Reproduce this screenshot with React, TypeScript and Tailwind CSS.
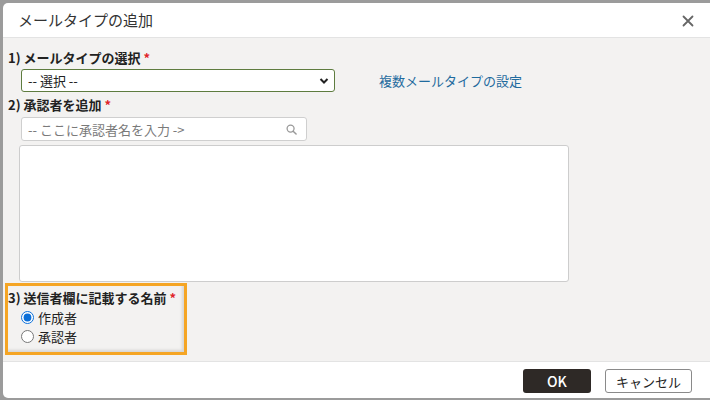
import React from "react";

const font = { fontFamily: '"Noto Sans CJK JP", "Noto Sans", sans-serif' };

const Req = () => <span className="ml-[3px] text-[#e0242b]">*</span>;

export default function App() {
  return (
    <div
      className="w-[710px] h-[400px] overflow-hidden bg-[#9b9b9b] pt-[3px] pl-[3px] text-[#222]"
      style={font}
    >
      <div className="w-[707px] h-[395px] flex flex-col bg-white rounded-tl-[5px] rounded-bl-[5px] overflow-hidden">
        {/* header */}
        <div className="h-[35px] shrink-0 flex items-center justify-between pl-[15px] pr-[16px] border-b border-[#e3e3e3]">
          <span className="text-[15px] text-[#333]">メールタイプの追加</span>
          <svg width="12" height="12" viewBox="0 0 12 12" className="mt-[1px]">
            <path d="M1.5 1.5 L10.5 10.5 M10.5 1.5 L1.5 10.5" stroke="#666" strokeWidth="1.8" strokeLinecap="round" />
          </svg>
        </div>

        {/* body */}
        <div className="flex-1 bg-[#f3f2f1] flex flex-col text-[13px]">
          <div className="mt-[11px] ml-[5px] h-[18px] leading-[18px] font-bold">
            1) メールタイプの選択<Req />
          </div>
          <div className="mt-[2px] flex items-center">
            <div className="ml-[18px] w-[314px] h-[23px] bg-white border border-[#5e7c3f] rounded-[3px] flex items-center justify-between pl-[6px] pr-[5px]">
              <span className="leading-none">-- 選択 --</span>
              <svg width="10" height="8" viewBox="0 0 10 8">
                <path d="M1.5 2 L5 5.5 L8.5 2" stroke="#222" strokeWidth="2" fill="none" />
              </svg>
            </div>
            <span className="ml-[44px] text-[#1f6b9e]">複数メールタイプの設定</span>
          </div>

          <div className="mt-[4px] ml-[5px] h-[18px] leading-[18px] font-bold">
            2) 承認者を追加<Req />
          </div>
          <div className="mt-[3px] ml-[18px] w-[286px] h-[24px] bg-white border border-[#cfcfcf] rounded-[3px] flex items-center justify-between pl-[6px] pr-[9px]">
            <span className="text-[#7a7a7a] leading-none">-- ここに承認者名を入力 -&gt;</span>
            <svg width="11" height="11" viewBox="0 0 12 12">
              <circle cx="5" cy="5" r="3.8" stroke="#999" strokeWidth="1.4" fill="none" />
              <path d="M7.8 7.8 L11 11" stroke="#999" strokeWidth="1.6" strokeLinecap="round" />
            </svg>
          </div>
          <div className="mt-[4px] ml-[16px] w-[550px] h-[137px] bg-white border border-[#cdcdcd] rounded-[3px]" />

          <div className="mt-[1px] ml-[2px] w-[182px] h-[72px] border-[3px] border-[#f5a524] shadow-[inset_-2px_-2px_3px_rgba(0,0,0,0.12)] flex flex-col">
            <div className="mt-[3px] h-[18px] leading-[18px] font-bold">
              3) 送信者欄に記載する名前<Req />
            </div>
            <label className="mt-[1px] ml-[13px] h-[19px] flex items-center gap-[4px]">
              <input type="radio" name="sender" defaultChecked className="m-0 w-[13px] h-[13px] accent-[#0b6fd8]" />
              <span>作成者</span>
            </label>
            <label className="ml-[13px] h-[19px] flex items-center gap-[4px]">
              <input type="radio" name="sender" className="m-0 w-[13px] h-[13px]" />
              <span>承認者</span>
            </label>
          </div>
          <div className="flex-1" />
        </div>

        {/* footer */}
        <div className="h-[37px] shrink-0 border-t border-[#e3e3e3] flex items-start justify-end gap-[14px] pt-[7px] pr-[18px]">
          <button className="w-[68px] h-[24px] rounded-[3px] bg-[#2e2926] text-white text-[14px] font-medium leading-none">
            OK
          </button>
          <button className="w-[87px] h-[24px] rounded-[3px] bg-white border border-[#8a8a8a] text-[13px] text-[#222] leading-none">
            キャンセル
          </button>
        </div>
      </div>
    </div>
  );
}
